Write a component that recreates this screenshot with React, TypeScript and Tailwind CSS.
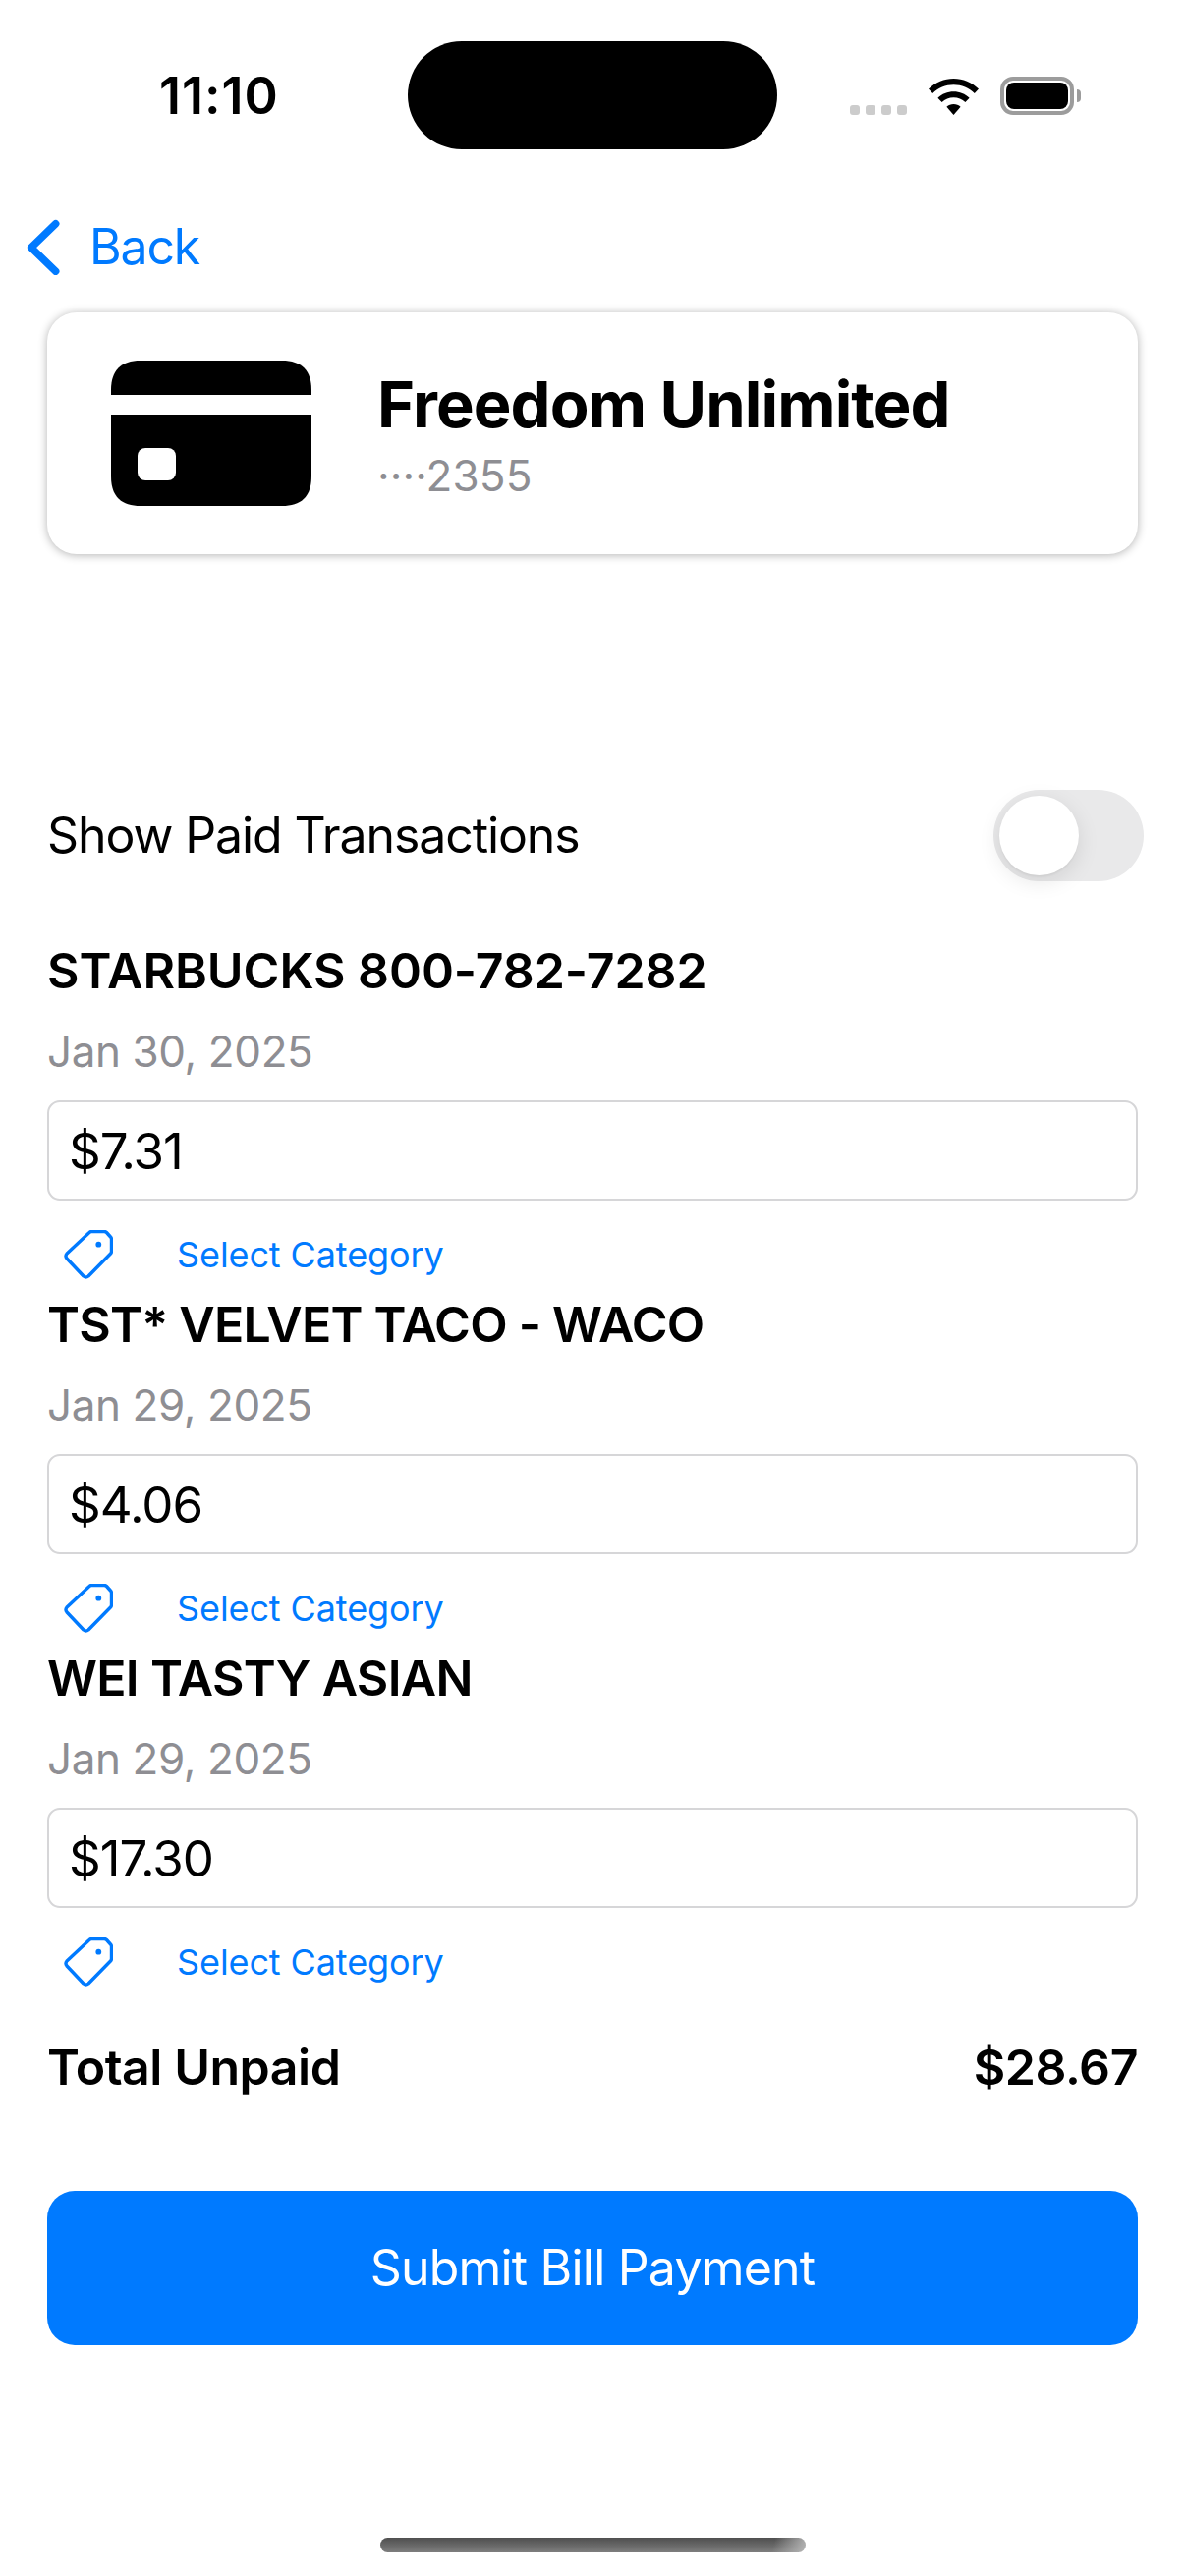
import React from "react";

function Wifi() {
  return (
    <svg width="51" height="37" viewBox="0 0 51 37" fill="#000">
      <path d="M25.5 0C35 0 44 3.8 51 10.6L46.8 15C41.2 9.6 33.6 6.3 25.5 6.3S9.8 9.6 4.2 15L0 10.6C7 3.8 16 0 25.5 0Z" />
      <path d="M25.5 13.2C31.6 13.2 37.3 15.5 41.6 19.7L37.4 24.1C34.2 21 30 19.3 25.5 19.3S16.8 21 13.6 24.1L9.4 19.7C13.7 15.5 19.4 13.2 25.5 13.2Z" />
      <path d="M25.5 26C28.2 26 30.7 27 32.6 28.8L25.5 37L18.4 28.8C20.3 27 22.8 26 25.5 26Z" />
    </svg>
  );
}

function Chevron() {
  return (
    <svg width="34" height="57" viewBox="0 0 34 57" fill="none" stroke="#007aff" strokeWidth="7.5" strokeLinecap="round" strokeLinejoin="round">
      <path d="M29.7 4.8L4.7 29L29.7 53.2" />
    </svg>
  );
}

function CardIcon() {
  return (
    <svg width="204" height="148" viewBox="0 0 204 148" fill="#000">
      <path d="M0 35V30C0 10 10 0 30 0H174C194 0 204 10 204 30V35H0Z" />
      <path d="M0 55H204V118C204 138 194 148 174 148H30C10 148 0 138 0 118V55Z" />
      <rect x="27" y="89" width="39" height="33" rx="8" fill="#fff" />
    </svg>
  );
}

function Tag() {
  return (
    <svg width="50" height="50" viewBox="0 0 50 50" fill="none" stroke="#007aff" strokeWidth="3.4" className="shrink-0">
      <path d="M28 1.5H41Q42.5 1.5 43.5 2.5L47.5 7Q48.5 8 48.5 9.5V21.5Q48.5 23 47.5 24L25 47Q22.5 49 20 47L3 29Q1 26.5 3 24L26 2.5Q27 1.5 28 1.5Z" strokeLinejoin="round" />
      <circle cx="35.3" cy="14.7" r="2.9" fill="#007aff" stroke="none" />
    </svg>
  );
}

function Tx({ name, date, amount, nameClass }: { name: string; date: string; amount: string; nameClass: string }) {
  return (
    <div className="flex flex-col">
      <div className={`h-[66px] flex items-center text-[50px] font-semibold text-black whitespace-nowrap ${nameClass}`}>{name}</div>
      <div className="h-[99px] pb-[1px] flex items-center text-[44px] text-[#8e8e93] tracking-[-0.4px]">{date}</div>
      <div className="h-[102px] rounded-[13px] border-2 border-[#d6d6d8] flex items-center pl-[20px] pt-[2px] text-[51px] text-black tracking-[-1px]">{amount}</div>
      <div className="h-[93px] pt-[16px] flex items-center">
        <div className="ml-[17px]"><Tag /></div>
        <span className="ml-[65px] text-[36px] text-[#007aff] tracking-[-0.1px]">Select Category</span>
      </div>
    </div>
  );
}

export default function App() {
  return (
    <div className="w-[1206px] h-[2622px] bg-white font-['Inter',sans-serif] overflow-hidden flex flex-col">
      <div className="h-[152px] pt-[42px] flex items-start shrink-0">
        <div className="w-[415px] h-[110px] pl-[162px] pt-[2px] flex items-center text-[52px] font-semibold text-black tracking-[1px]">11:10</div>
        <div className="w-[376px] h-[110px] rounded-[55px] bg-black" />
        <div className="h-[110px] ml-[74px] flex items-center">
          <div className="h-[39px] flex items-end">
            <div className="flex gap-[6px]">
              <div className="w-[10px] h-[10px] rounded-[3px] bg-[#cccccc]" />
              <div className="w-[10px] h-[10px] rounded-[3px] bg-[#cccccc]" />
              <div className="w-[10px] h-[10px] rounded-[3px] bg-[#cccccc]" />
              <div className="w-[10px] h-[10px] rounded-[3px] bg-[#cccccc]" />
            </div>
            <div className="ml-[22px]"><Wifi /></div>
            <div className="ml-[22px] flex items-center h-[39px]">
              <div className="w-[75px] h-[39px] rounded-[13px] border-[4px] border-[#9c9c9c] p-[2px]">
                <div className="w-full h-full rounded-[8px] bg-black" />
              </div>
              <div className="ml-[3px] w-[4px] h-[13px] rounded-r-full bg-[#9c9c9c]" />
            </div>
          </div>
        </div>
      </div>

      <div className="h-[166px] pt-[32px] pl-[27px] flex items-center shrink-0">
        <Chevron />
        <span className="ml-[30px] text-[50px] text-[#007aff] tracking-[-1.2px]">Back</span>
      </div>

      <div className="px-[48px] flex flex-col">
        <div className="h-[246px] rounded-[30px] bg-white shadow-[0_1px_10px_rgba(0,0,0,0.3)] flex items-center pl-[65px]">
          <CardIcon />
          <div className="ml-[67px] pt-[3px] flex flex-col">
            <div className="text-[65px] leading-[72px] font-bold text-black tracking-[-0.9px]">Freedom Unlimited</div>
            <div className="mt-[11px] text-[44px] leading-[50px] text-[#8e8e93] tracking-[0.1px]">····2355</div>
          </div>
        </div>

        <div className="mt-[240px] h-[93px] -mr-[6px] flex items-center justify-between">
          <span className="text-[50px] text-black tracking-[-1.1px]">Show Paid Transactions</span>
          <div className="w-[153px] h-[93px] rounded-full bg-[#e9e9ea] p-[6px]">
            <div className="w-[81px] h-[81px] rounded-full bg-white shadow-[0_6px_22px_rgba(0,0,0,0.1),0_2px_2px_rgba(0,0,0,0.04)]" />
          </div>
        </div>

        <div className="mt-[58px] flex flex-col">
          <Tx name="STARBUCKS 800-782-7282" date="Jan 30, 2025" amount="$7.31" nameClass="tracking-[-0.05px]" />
          <Tx name="TST* VELVET TACO - WACO" date="Jan 29, 2025" amount="$4.06" nameClass="tracking-[-0.75px]" />
          <Tx name="WEI TASTY ASIAN" date="Jan 29, 2025" amount="$17.30" nameClass="tracking-[-0.7px]" />
        </div>

        <div className="h-[138px] flex items-center justify-between text-[50px] font-semibold text-black tracking-[-0.45px]">
          <span>Total Unpaid</span>
          <span>$28.67</span>
        </div>

        <div className="mt-[57px] h-[157px] rounded-[28px] bg-[#007aff] flex items-center justify-center text-[50px] text-white tracking-[-0.8px]">
          Submit Bill Payment
        </div>
      </div>

      <div className="mt-[196px] mx-auto w-[433px] h-[15px] rounded-full bg-[linear-gradient(105deg,transparent_92%,#b5b5b5_100%),linear-gradient(180deg,#4f4f4f,#7e7e7e)]" />
    </div>
  );
}
